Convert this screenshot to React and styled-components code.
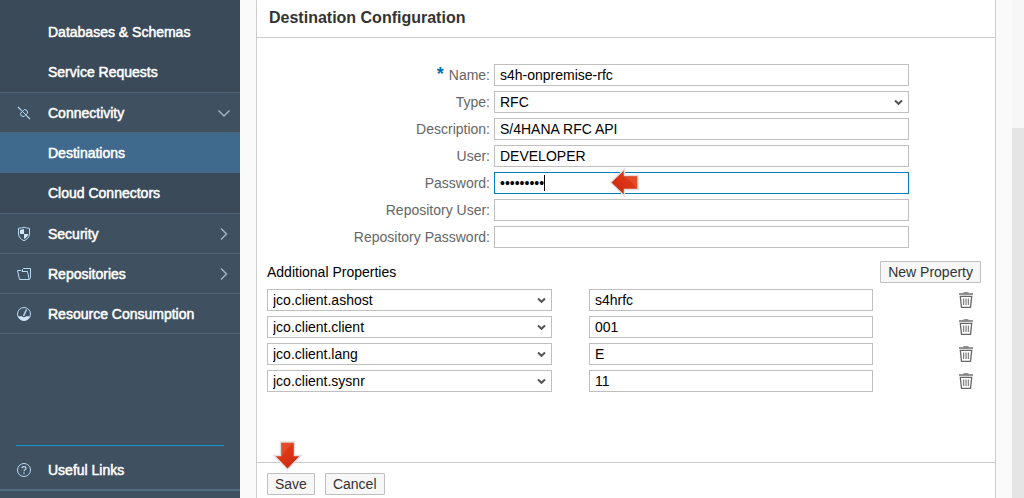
import React from "react";
import styled, { createGlobalStyle, css } from "styled-components";

const GlobalStyle = createGlobalStyle`
  * { box-sizing: border-box; }
  body {
    margin: 0;
    background: #fafafa;
    font-family: "Liberation Sans", Arial, Helvetica, sans-serif;
    font-size: 14px;
    line-height: 20px;
    color: #000;
  }
  button, input, select { font: inherit; }
`;

const Page = styled.div`
  display: flex;
  min-height: 100vh;
`;

const Sidebar = styled.nav`
  display: flex;
  flex-direction: column;
  flex: 0 0 240px;
  background: #3f5161;
`;

const SubMenu = styled.div`
  background: #3a4a59;
  padding-top: ${(p) => (p.$continued ? 12 : 0)}px;
`;

const navText = css`
  display: flex;
  align-items: center;
  color: #fff;
  text-decoration: none;
  -webkit-text-stroke: 0.5px #fff;
`;

const SubLink = styled.a`
  ${navText}
  height: 40px;
  padding-left: 48px;
  background: ${(p) => (p.$active ? "#3f6a8d" : "transparent")};
`;

const SectionLink = styled.a`
  ${navText}
  height: ${(p) => (p.$open ? 41 : 40)}px;
  padding: 0 8px 0 16px;
  gap: 16px;
  border-top: 1px solid #4f6575;
  border-bottom: ${(p) => (p.$open ? "1px solid #4f6575" : "0")};
`;

const SectionLabel = styled.span`
  flex: 1;
`;

const NavEnd = styled.div`
  border-top: 1px solid #4f6575;
`;

const UsefulLinks = styled.div`
  margin-top: auto;
  border-bottom: 2px solid #4f6b80;
  margin-bottom: 7px;
`;

const Divider = styled.div`
  height: 1px;
  margin: 0 16px;
  background: #1193d4;
`;

const HelpLink = styled.a`
  ${navText}
  height: 43px;
  padding: 4px 16px 0;
  gap: 16px;
`;

const Main = styled.main`
  display: flex;
  flex: 1;
  padding: 0 16px;
`;

const Panel = styled.section`
  display: flex;
  flex-direction: column;
  flex: 1;
  background: #fff;
  border: solid #ccc;
  border-width: 0 1px;
`;

const PanelTitle = styled.h1`
  margin: 0;
  padding: 8px 12px 9px;
  font-size: 16px;
  line-height: 20px;
  color: #333;
  border-bottom: 1px solid #ccc;
`;

const Form = styled.form`
  display: flex;
  flex-direction: column;
  flex: 1;
`;

const Fields = styled.div`
  display: grid;
  gap: 5px;
  padding-top: 26px;
`;

const FieldRow = styled.div`
  display: grid;
  grid-template-columns: 233fr 415fr 82fr;
  column-gap: 4px;
  height: 22px;
`;

const FieldLabel = styled.label`
  color: #666;
  line-height: 22px;
  text-align: right;
  white-space: nowrap;
`;

const Required = styled.span`
  color: #0070b0;
  font-size: 18px;
  font-weight: bold;
  line-height: 16px;
`;

const Control = styled.div`
  position: relative;
  display: flex;
  min-width: 0;
`;

const boxStyle = css`
  width: 100%;
  height: 22px;
  padding: 0 5px;
  color: #000;
  background: #fff;
  border: 1px solid #bfbfbf;
  border-radius: 0;
  outline: none;
`;

const TextBox = styled.input`
  ${boxStyle}
  border-color: ${(p) => (p.$focused ? "#007cc0" : "#bfbfbf")};
`;

const SelectBox = styled.select`
  ${boxStyle}
  appearance: none;
`;

const SelectArrow = styled.svg`
  position: absolute;
  top: 8px;
  right: 6px;
  pointer-events: none;
`;

const Caret = styled.span`
  position: absolute;
  top: 3px;
  left: 50px;
  width: 1px;
  height: 16px;
  background: #000;
`;

const FieldPointer = styled.svg`
  position: absolute;
  top: -4px;
  left: 116px;
`;

const SavePointer = styled.svg`
  position: absolute;
  top: -32px;
  left: 6px;
  pointer-events: none;
`;

const Properties = styled.div`
  padding: 13px 14px 0 10px;
`;

const PropertiesHead = styled.div`
  display: flex;
  align-items: center;
  justify-content: space-between;
`;

const PropertiesTitle = styled.h2`
  margin: 0;
  font-size: 14px;
  font-weight: normal;
`;

const PropertyList = styled.div`
  display: grid;
  gap: 5px;
  padding-top: 6px;
`;

const PropertyRow = styled.div`
  display: grid;
  grid-template-columns: 285fr 284fr 71fr;
  column-gap: 37px;
`;

const IconButton = styled.button`
  justify-self: end;
  display: flex;
  align-items: center;
  justify-content: center;
  width: 30px;
  height: 22px;
  padding: 0;
  border: 0;
  background: none;
`;

const Button = styled.button`
  height: 22px;
  padding: 0 7px;
  color: #333;
  line-height: 20px;
  background: #f7f7f7;
  border: 1px solid #bfbfbf;
  border-radius: 1px;
`;

const Footer = styled.footer`
  display: flex;
  gap: 10px;
  margin-top: auto;
  padding: 10px 10px 3px;
  border-top: 1px solid #ccc;
`;

const ButtonSlot = styled.div`
  position: relative;
`;

const ScrollTrack = styled.div`
  flex: 0 0 12px;
  padding-top: 128px;
  display: flex;
  background: #f7f7f7;
`;

const ScrollThumb = styled.div`
  flex: 1;
  background: #e5e5e5;
`;

const glyph = { width: 16, height: 16, viewBox: "0 0 16 16", fill: "none", stroke: "#b9d9f3" };

const PlugIcon = () => (
  <svg {...glyph} aria-hidden="true">
    <path d="M2 2L5.300 5.300M10.800 10.800L14 14" strokeWidth="1.200" />
    <path d="M4.500 8.300L8.300 4.500Q11.800 4.500 11.700 8L8 11.700Q4.300 11.700 4.500 8.300ZM5.300 5.300L10.800 10.800" />
  </svg>
);

const ShieldIcon = () => (
  <svg {...glyph} aria-hidden="true">
    <path d="M2.500 2.300Q5.500 2.200 8 1.200Q10.500 2.200 13.500 2.300V8Q13.200 12.500 8 14.700Q2.800 12.500 2.500 8Z" />
    <path d="M8 3V8H4V4zM8 8h4.200q-.2 3-4.200 5z" fill="#cfe6fb" stroke="none" />
  </svg>
);

const FolderIcon = () => (
  <svg {...glyph} aria-hidden="true">
    <path d="M1.500 4.500H5L6 5.500H11.500L13.200 13.500H3.500zM6.500 5V3.500L7.500 2.500H14.500V11.500L13.400 13.500" />
  </svg>
);

const GaugeIcon = () => (
  <svg {...glyph} aria-hidden="true">
    <circle cx="8" cy="8" r="6.500" />
    <path d="M2 10.200H6A2.200 2 0 0 0 10 10.200H14Q12 14.500 8 14.500T2 10.200Z" fill="#cfe6fb" stroke="none" />
    <path d="M7.500 10L10.500 3.500" strokeWidth="1.500" />
  </svg>
);

const HelpIcon = () => (
  <svg {...glyph} aria-hidden="true">
    <circle cx="8" cy="8" r="6.500" />
    <path d="M6 6.300C6 4 10 4 10 6.300C10 7.800 8 7.700 8 9.300M8 10.500V12" strokeWidth="1.200" />
  </svg>
);

const NavChevron = ({ down }) => (
  <svg width="16" height="16" viewBox="0 0 16 16" fill="none" stroke="#9fb0bf" strokeWidth="1.500" aria-hidden="true">
    <path d={down ? "M2.500 5.500L8 11L13.500 5.500" : "M5 2.500L10.500 8L5 13.500"} />
  </svg>
);

const TrashIcon = () => (
  <svg width="16" height="18" viewBox="0 0 16 18" fill="none" stroke="#666" aria-hidden="true">
    <path d="M1 3H15" strokeWidth="1.400" />
    <path d="M5.500 1.800H10.500" />
    <path d="M2.300 5.300H13.700L12.500 16.300H3.500Z" strokeWidth="1.300" />
    <path d="M5.700 7.500V14M8 7.500V14M10.300 7.500V14" />
  </svg>
);

const Chevron = () => (
  <SelectArrow width="9" height="7" viewBox="0 0 9 7" aria-hidden="true">
    <path d="M1 1.500L4.500 4.800L8 1.500" fill="none" stroke="#555" strokeWidth="2" />
  </SelectArrow>
);

const ArrowShape = ({ id }) => (
  <>
    <defs>
      <linearGradient id={id} x1="0" y1="0" x2="1" y2="1">
        <stop offset="0" stopColor="#e2401c" />
        <stop offset="0.500" stopColor="#dc3415" />
        <stop offset="1" stopColor="#b92710" />
      </linearGradient>
    </defs>
    <path d="M7.500 1H21.500V14.500H28L14.500 28.500L1 14.500H7.500Z" fill={`url(#${id})`} stroke="#e4dfdd" strokeWidth="1.500" />
    <path d="M9 2H20V3Q13 7 9 15Z" fill="#e85a32" opacity="0.600" />
  </>
);

const fields = [
  { id: "name", label: "Name:", value: "s4h-onpremise-rfc", required: true },
  { id: "type", label: "Type:", value: "RFC", kind: "select" },
  { id: "description", label: "Description:", value: "S/4HANA RFC API" },
  { id: "user", label: "User:", value: "DEVELOPER" },
  { id: "password", label: "Password:", value: "developer", kind: "password" },
  { id: "repository-user", label: "Repository User:", value: "" },
  { id: "repository-password", label: "Repository Password:", value: "", kind: "password" },
];

const properties = [
  ["jco.client.ashost", "s4hrfc"],
  ["jco.client.client", "001"],
  ["jco.client.lang", "E"],
  ["jco.client.sysnr", "11"],
];

function Field({ id, label, value, kind, required }) {
  const current = id === "password";
  return (
    <FieldRow>
      <FieldLabel htmlFor={id}>
        {required && <Required>* </Required>}
        {label}
      </FieldLabel>
      <Control>
        {kind === "select" ? (
          <>
            <SelectBox id={id} defaultValue={value}>
              <option>{value}</option>
            </SelectBox>
            <Chevron />
          </>
        ) : (
          <TextBox id={id} type={kind || "text"} defaultValue={value} $focused={current} />
        )}
        {current && (
          <>
            <Caret />
            <FieldPointer width="30" height="30" viewBox="0 0 30 30" aria-hidden="true">
              <g transform="matrix(0 1 -1 0 29 0)">
                <ArrowShape id="pointer-field" />
              </g>
            </FieldPointer>
          </>
        )}
      </Control>
    </FieldRow>
  );
}

export default function App() {
  return (
    <>
      <GlobalStyle />
      <Page>
        <Sidebar>
          <SubMenu $continued>
            <SubLink href="#databases">Databases &amp; Schemas</SubLink>
            <SubLink href="#requests">Service Requests</SubLink>
          </SubMenu>
          <SectionLink href="#connectivity" $open>
            <PlugIcon />
            <SectionLabel>Connectivity</SectionLabel>
            <NavChevron down />
          </SectionLink>
          <SubMenu>
            <SubLink href="#destinations" $active>Destinations</SubLink>
            <SubLink href="#connectors">Cloud Connectors</SubLink>
          </SubMenu>
          <SectionLink href="#security">
            <ShieldIcon />
            <SectionLabel>Security</SectionLabel>
            <NavChevron />
          </SectionLink>
          <SectionLink href="#repositories">
            <FolderIcon />
            <SectionLabel>Repositories</SectionLabel>
            <NavChevron />
          </SectionLink>
          <SectionLink href="#consumption">
            <GaugeIcon />
            <SectionLabel>Resource Consumption</SectionLabel>
          </SectionLink>
          <NavEnd />
          <UsefulLinks>
            <Divider />
            <HelpLink href="#links">
              <HelpIcon />
              <SectionLabel>Useful Links</SectionLabel>
            </HelpLink>
          </UsefulLinks>
        </Sidebar>
        <Main>
          <Panel>
            <PanelTitle>Destination Configuration</PanelTitle>
            <Form onSubmit={(e) => e.preventDefault()}>
              <Fields>
                {fields.map((f) => (
                  <Field key={f.id} {...f} />
                ))}
              </Fields>
              <Properties>
                <PropertiesHead>
                  <PropertiesTitle>Additional Properties</PropertiesTitle>
                  <Button type="button">New Property</Button>
                </PropertiesHead>
                <PropertyList>
                  {properties.map(([key, value]) => (
                    <PropertyRow key={key}>
                      <Control>
                        <SelectBox aria-label="Property" defaultValue={key}>
                          <option>{key}</option>
                        </SelectBox>
                        <Chevron />
                      </Control>
                      <TextBox aria-label={key} defaultValue={value} />
                      <IconButton type="button" aria-label={`Delete ${key}`}>
                        <TrashIcon />
                      </IconButton>
                    </PropertyRow>
                  ))}
                </PropertyList>
              </Properties>
              <Footer>
                <ButtonSlot>
                  <Button type="submit">Save</Button>
                  <SavePointer width="30" height="30" viewBox="0 0 30 30" aria-hidden="true">
                    <ArrowShape id="pointer-save" />
                  </SavePointer>
                </ButtonSlot>
                <Button type="button">Cancel</Button>
              </Footer>
            </Form>
          </Panel>
        </Main>
        <ScrollTrack>
          <ScrollThumb />
        </ScrollTrack>
      </Page>
    </>
  );
}
